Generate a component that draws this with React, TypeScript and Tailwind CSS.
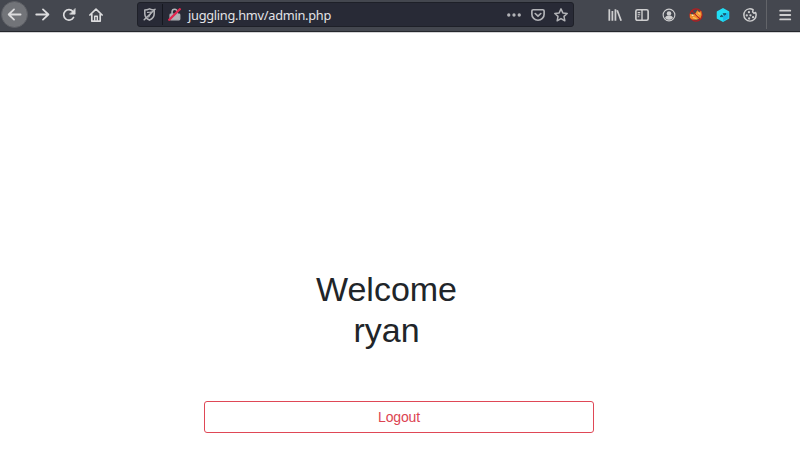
import type { ReactNode } from 'react';

function Icon({ children, size = 14 }: { children: ReactNode; size?: number }) {
  return (
    <svg
      width={size}
      height={size}
      viewBox="0 0 16 16"
      fill="none"
      stroke="currentColor"
      strokeWidth="1.9"
      strokeLinecap="round"
      strokeLinejoin="round"
      className="block shrink-0"
    >
      {children}
    </svg>
  );
}

function Navigation() {
  return (
    <nav className="flex h-full w-[137px] shrink-0 items-center pl-px text-[#dcdcde]">
      <button className="flex size-[27px] items-center justify-center rounded-full border border-[#5c5e64] bg-[#727479]">
        <Icon size={15}>
          <path d="M14.5 8H1.8M7.5 2.5 1.8 8l5.700 5.500" strokeWidth="1.900" />
        </Icon>
      </button>
      <button className="ml-[7px]">
        <Icon size={15}>
          <path d="M1.300 8h13M8.500 2.500 14.300 8l-5.800 5.500" strokeWidth="1.900" />
        </Icon>
      </button>
      <button className="ml-[12px]">
        <Icon>
          <path d="M13.2 10.8A6 6 0 1 1 12.5 4" />
          <path d="M15 1v6H9z" fill="currentColor" strokeWidth="0.8" />
        </Icon>
      </button>
      <button className="ml-[13px]">
        <Icon>
          <path d="M1 8 8 1.2 15 8M3.2 7.2V15h9.6V7.2" />
          <path d="M6.5 14V9.5h3V14" strokeWidth="1.6" />
        </Icon>
      </button>
    </nav>
  );
}

function AddressBar() {
  return (
    <div className="mt-[2px] flex h-[25px] w-[437px] shrink-0 items-center self-start rounded-[3px] border border-[#1e2028] bg-[#282a36] pl-[5px] pr-[5px] text-[#b2b3b7]">
      <Icon size={13}>
        <path d="M2.2 2.5C5 2.5 6.500 1.800 8 1c1.500.800 3 1.500 5.800 1.500V7c0 3.500-2.200 6-5.800 8-3.600-2-5.800-4.500-5.800-8z" />
        <path d="M5.500 5.500c2 0 3-.700 5-.500L7 11" strokeWidth="1.500" />
        <path d="M1.500 14.500 14.800 1.500" />
      </Icon>
      <span className="ml-[6px] h-[21px] w-px bg-[#15171e]" />
      <span className="ml-[5px]">
        <Icon size={13}>
          <path d="M5 7V4.700a3.200 3.200 0 0 1 6.400 0V7" />
          <rect x="2.500" y="7.500" width="12" height="7" rx="1" fill="currentColor" strokeWidth="1.500" />
          <path d="M1.500 14.500 14.500 1.500" stroke="#e22850" strokeWidth="2.900" />
        </Icon>
      </span>
      <span className="ml-[7px] whitespace-nowrap font-['Noto_Sans',sans-serif] text-[12.8px] leading-[20px] tracking-[-0.28px] text-[#e3e3e6]">
        juggling.hmv/admin.php
      </span>
      <div className="ml-auto flex items-center gap-[9px]">
        <span className="mr-px">
          <Icon>
            <g fill="currentColor" stroke="none">
              <circle cx="2" cy="8" r="1.900" />
              <circle cx="8" cy="8" r="1.900" />
              <circle cx="14" cy="8" r="1.900" />
            </g>
          </Icon>
        </span>
        <Icon>
          <path d="M2.500 2h11A1.500 1.500 0 0 1 15 3.500V7A7 7 0 0 1 1 7V3.500A1.500 1.500 0 0 1 2.500 2z" />
          <path d="m4.800 6.300 3.200 3 3.200-3" />
        </Icon>
        <Icon>
          <path d="m8 1 2.100 4.600 5 .600-3.700 3.400 1 5L8 12.100l-4.400 2.500 1-5L.900 6.200l5-.600z" strokeWidth="1.700" />
        </Icon>
      </div>
    </div>
  );
}

function Extensions() {
  return (
    <div className="ml-auto flex h-full items-center text-[#cececf]">
      <div className="flex items-center gap-[13px]">
        <Icon>
          <path d="M1.500 1.500v13M5 3.500v11M8.500 1.500v13M10.500 2.500l4.500 12" strokeLinecap="butt" strokeWidth="2" />
        </Icon>
        <Icon>
          <rect x="1" y="2" width="14" height="12" rx="1.800" />
          <path d="M8 2.500v11" strokeWidth="1.600" />
          <path d="M3.500 5.300h2M3.500 7.700h2M3.500 10h1" strokeWidth="1.200" />
        </Icon>
        <Icon>
          <circle cx="8" cy="8" r="6.700" strokeWidth="1.300" />
          <circle cx="8" cy="6.200" r="2.600" fill="currentColor" stroke="none" />
          <path d="M3.500 11.500c.300-2 1.700-2.600 4.500-2.600s4.200.600 4.500 2.600C11.300 13 9.800 13.500 8 13.500s-3.300-.500-4.500-2z" fill="currentColor" stroke="none" />
        </Icon>
        <Icon>
          <circle cx="8" cy="8" r="6.900" stroke="#b51e20" strokeWidth="1.500" />
          <path d="M1 6.500 4 7.500l3-1 2.500-4 2 2 2.500-1 .500 4.500-1.500 4-4.500 1.500-5-.500L1 11z" fill="#ef8d2c" stroke="none" />
          <path d="m8 7 2.500 2.500M10.500 5.500l2 1.500M5 11l3 1" stroke="#ffc35c" strokeWidth="1.500" />
          <path d="m3.500 8 1 .500" stroke="#fff0cf" strokeWidth="1.300" />
          <path d="m3.500 3.500 9 9" stroke="#b51e20" strokeWidth="1.200" />
        </Icon>
        <Icon>
          <path d="m8 1 6.200 3.500v7L8 15l-6.200-3.500v-7z" fill="#22dff5" stroke="#22dff5" />
          <path d="M8 8 14.200 4.500v7L8 15z" fill="#18bced" stroke="none" />
          <path d="M5 9.500 6.500 8l1 1.500zM8.500 6.500h3L10 8z" fill="#1b4a60" stroke="#1b4a60" strokeWidth="1" />
        </Icon>
        <Icon>
          <path d="M7 1C3.500 1.500 1 4.500 1 8a7 7 0 0 0 14 0c0-1-.200-2-.600-2.800L12.500 6 11 4.500l.500-2.500C10.200 1.200 8.500.800 7 1z" strokeWidth="1.700" />
          <g fill="currentColor" stroke="none">
            <circle cx="6.800" cy="4.800" r="1.300" />
            <circle cx="4.300" cy="8.500" r="1.300" />
            <circle cx="8.500" cy="8.300" r="1.300" />
            <circle cx="7" cy="12" r="1.300" />
            <circle cx="11.500" cy="10.500" r="1.300" />
          </g>
        </Icon>
      </div>
      <span className="ml-[9px] h-[29px] w-px self-start bg-[#626469]" />
      <button className="ml-[11px] mr-[8px]">
        <Icon>
          <path d="M2.500 3h11.500M2.500 8h11.500M2.500 13h11.500" strokeWidth="2.100" />
        </Icon>
      </button>
    </div>
  );
}

export default function App() {
  return (
    <div className="flex h-[461px] w-[800px] flex-col overflow-hidden bg-white">
      <header className="flex h-[32px] shrink-0 border-b border-[#24262c] bg-[#44474f]">
        <div className="flex h-[29px] w-full items-center">
          <Navigation />
          <AddressBar />
          <Extensions />
        </div>
      </header>
      <main className="flex grow flex-col border-t border-[#d4d4d6] font-['Liberation_Sans',Arial,sans-serif]">
        <h1 className="ml-[204px] mt-[236px] w-[365px] text-center text-[34px] leading-[41px] text-[#212529]">
          Welcome
          <br />
          ryan
        </h1>
        <button className="ml-[204px] mt-[50px] h-[32px] w-[390px] rounded-[3px] border border-[#df4856] text-[14px] tracking-[-0.15px] text-[#dc4451]">
          Logout
        </button>
      </main>
    </div>
  );
}
